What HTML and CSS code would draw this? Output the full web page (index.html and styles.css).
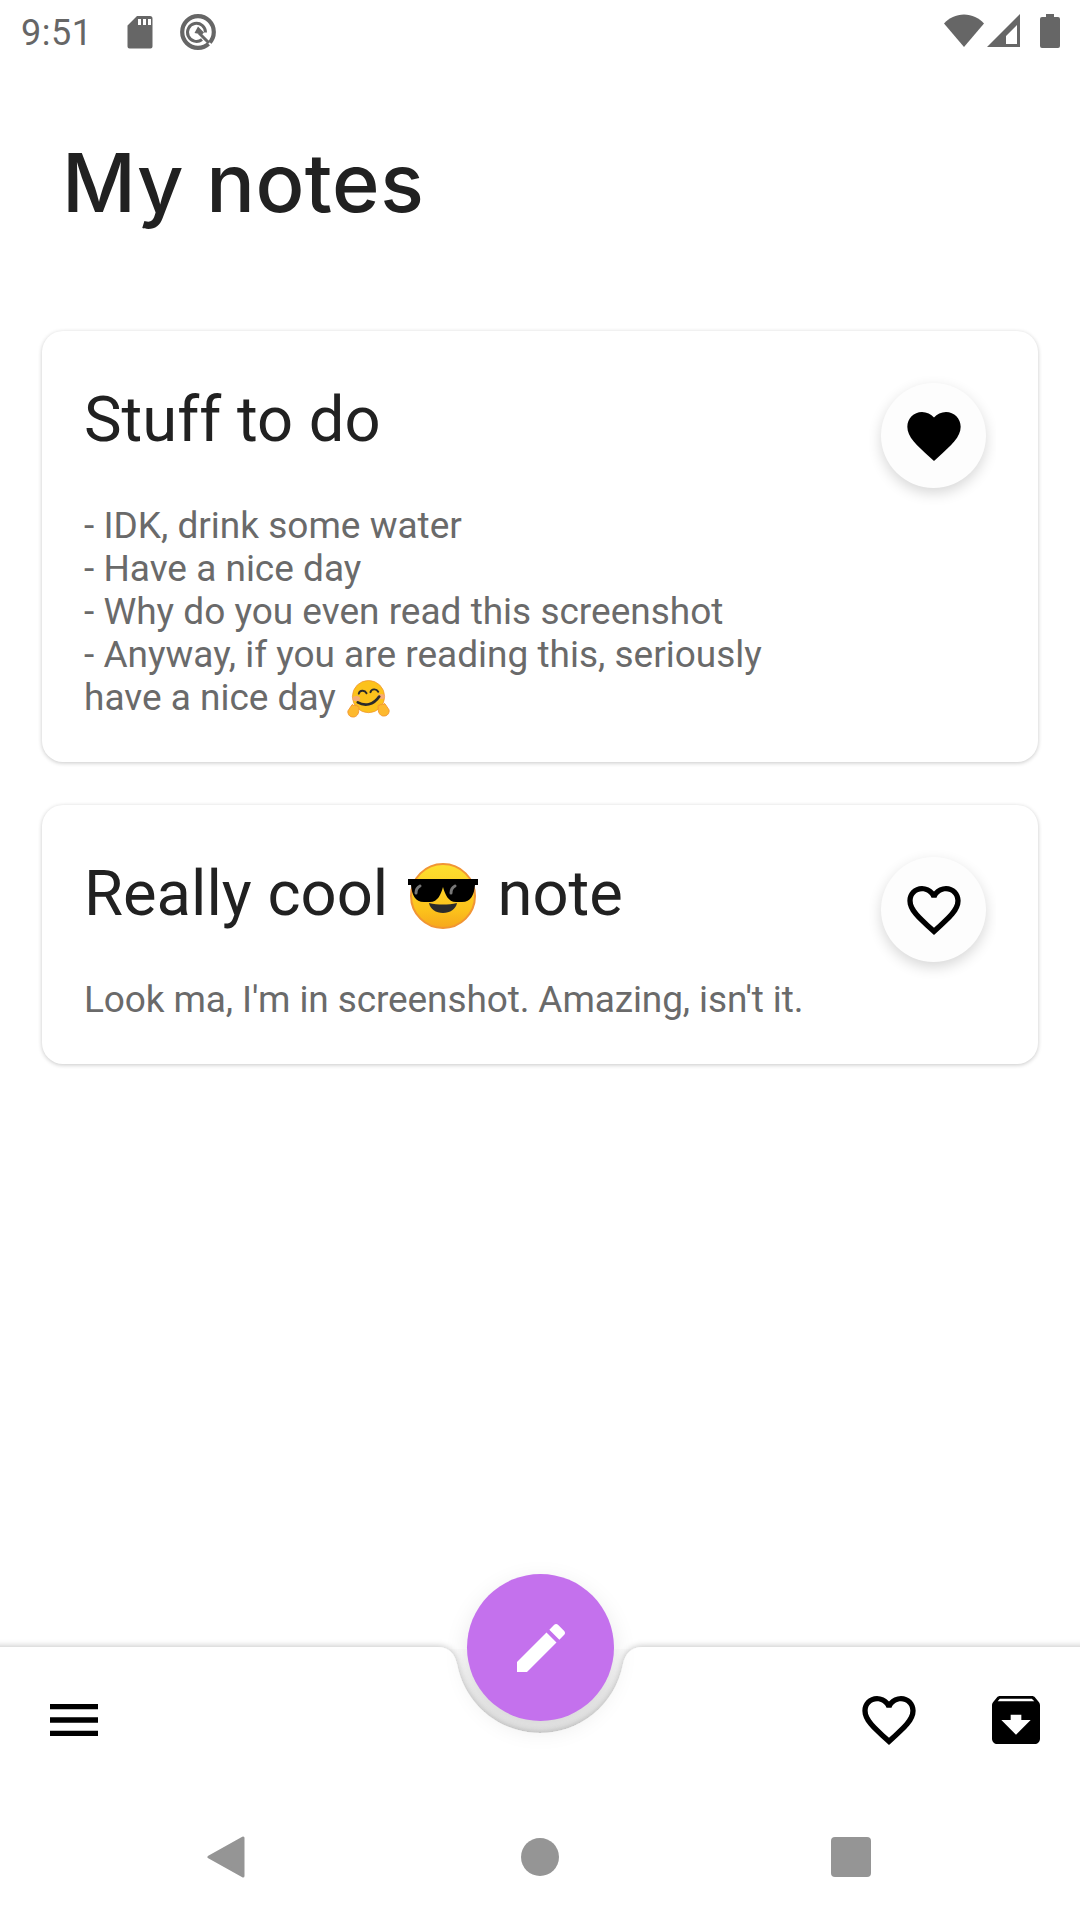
FILE: index.html
```html
<!DOCTYPE html>
<html lang="en">

<head>
    <meta charset="UTF-8">
    <meta name="viewport" content="width=device-width, initial-scale=1.0">
    <title>My notes</title>
    <link rel="stylesheet" href="styles.css">
</head>

<body>
    <div class="page">
        <header class="status-bar">
            <div class="status-left">
                <span class="time">9:51</span>
                <svg class="sd-icon" viewBox="0 0 26 34" width="26" height="34">
                    <path fill="#666" d="M10 1h13a2.500 2.500 0 0 1 2.500 2.500v28a2 2 0 0 1-2 2h-21a2 2 0 0 1-2-2V10.500zM11 4v6h3V4zm5 0v6h3V4zm5 0v6h3V4z" fill-rule="evenodd"/>
                </svg>
                <svg class="q-icon" viewBox="0 0 38 38" width="38" height="38">
                    <circle cx="19" cy="19" r="15.800" fill="none" stroke="#666" stroke-width="4.200"/>
                    <path fill="none" stroke="#666" stroke-width="3" d="M23 26.500a9 9 0 1 1 3.500-7"/>
                    <path fill="#666" d="M19 13.500l6 6-3 3-1.500-1.500-5-1z"/>
                    <path fill="none" stroke="#fff" stroke-width="2" d="M25 25l10 10"/>
                    <path fill="none" stroke="#666" stroke-width="3" d="M20 20l10 10"/>
                </svg>
            </div>
            <div class="status-right">
                <svg viewBox="0 0 40 33" width="40" height="33">
                    <path fill="#666" d="M0 9.500C5 4 12 .5 20 .5s15 3.500 20 9L20 33z"/>
                </svg>
                <svg viewBox="0 0 34 33" width="34" height="33">
                    <path fill="#666" fill-rule="evenodd" d="M33 0v33H0zM30 11l-11 11v8h11z"/>
                </svg>
                <svg class="battery" viewBox="0 0 20 34" width="20" height="34">
                    <path fill="#666" d="M6 0h8v3h4a2 2 0 0 1 2 2v27a2 2 0 0 1-2 2H2a2 2 0 0 1-2-2V5a2 2 0 0 1 2-2h4z"/>
                </svg>
            </div>
        </header>

        <main class="content">
            <h1 class="page-title">My notes</h1>

            <div class="note">
                <div class="note-text">
                    <h2 class="note-title">Stuff to do</h2>
                    <p class="note-body">- IDK, drink some water<br>- Have a nice day<br>- Why do you even read this screenshot<br>- Anyway, if you are reading this, seriously<br>have a nice day
                        <svg class="hug-emoji" viewBox="0 0 44 40" width="43" height="39">
                            <circle cx="22" cy="17" r="16.500" fill="#fcc21b" stroke="#f19534" stroke-width=".8"/>
                            <ellipse cx="9.500" cy="19" rx="3.800" ry="2.600" fill="#f5a58a" opacity=".8"/>
                            <ellipse cx="35" cy="17" rx="3.800" ry="2.600" fill="#f5a58a" opacity=".8"/>
                            <path fill="none" stroke="#2b2b2b" stroke-width="2" stroke-linecap="round" d="M12 14c1-3.500 6-4 8-.5M24 12.500c1-3.500 6-4 8-.5"/>
                            <path fill="none" stroke="#2b2b2b" stroke-width="2.800" stroke-linecap="round" d="M11 23c7 4 16 3 22-6"/>
                            <g fill="#fdb92e" stroke="#f19534" stroke-width=".9" stroke-linejoin="round">
                                <path d="M1 34c-.5-1.500 0-3 1-4l3-4.500c.800-.800 1.700 0 1.300 1 .800-1.500 2.200-1.200 2.200 0 .800-1 2.200-.6 2 .6.800-.4 1.800-.2 1.700.8l-.2 3.600c0 3.500-2.500 6.500-5.500 6.500s-4.900-1.500-5.500-4z"/>
                                <path d="M43 33c.5-1.500 0-3-1-4l-3-4.500c-.8-.8-1.700 0-1.300 1-.8-1.500-2.200-1.200-2.200 0-.8-1-2.200-.6-2 .6-.8-.4-1.800-.2-1.700.8l.2 3.600c0 3.500 2.500 6.500 5.500 6.500s4.900-1.500 5.500-4z"/>
                            </g>
                        </svg>
                    </p>
                </div>
                <div class="fav-clip">
                    <div class="fav-btn">
                        <svg viewBox="0 0 24 24" width="64" height="64">
                            <path d="M12 21.350l-1.450-1.320C5.400 15.360 2 12.280 2 8.500 2 5.420 4.420 3 7.500 3c1.740 0 3.410.810 4.500 2.090C13.090 3.810 14.760 3 16.500 3 19.580 3 22 5.420 22 8.500c0 3.780-3.400 6.860-8.550 11.540L12 21.350z"/>
                        </svg>
                    </div>
                </div>
            </div>

            <div class="note">
                <div class="note-text">
                    <h2 class="note-title">Really cool
                        <svg class="cool-emoji" viewBox="0 0 70 66" width="70" height="66">
                            <defs>
                                <linearGradient id="cool-face" x1="0" y1="0" x2="0" y2="1">
                                    <stop offset="0" stop-color="#fde030"/>
                                    <stop offset=".72" stop-color="#fcc21b"/>
                                    <stop offset="1" stop-color="#f6a71c"/>
                                </linearGradient>
                            </defs>
                            <circle cx="35" cy="33" r="32" fill="url(#cool-face)" stroke="#f19534" stroke-width="2"/>
                            <path d="M0 16h70v6h-3c-1 10-4 17-13 17h-6c-8 0-11-8-13-15-2 7-5 15-13 15h-6C7 39 4 32 3 22H0z" fill="#000"/>
                            <path d="M8 30c0-4 2-6 4-7" fill="none" stroke="#777" stroke-width="3" stroke-linecap="round"/>
                            <path d="M43 30c0-4 2-6 4-7" fill="none" stroke="#777" stroke-width="3" stroke-linecap="round"/>
                            <path d="M21 40c9 2 19 2 28 0-1 6-7 10-14 10s-13-4-14-10z" fill="#2b2b2b"/>
                        </svg>
                        note</h2>
                    <p class="note-body note-body-tight">Look ma, I'm in screenshot. Amazing, isn't it.</p>
                </div>
                <div class="fav-clip">
                    <div class="fav-btn">
                        <svg viewBox="0 0 24 24" width="64" height="64">
                            <path d="M16.500 3c-1.740 0-3.410.810-4.500 2.090C10.910 3.810 9.240 3 7.500 3 4.420 3 2 5.420 2 8.500c0 3.780 3.400 6.860 8.550 11.540L12 21.350l1.450-1.320C18.600 15.360 22 12.280 22 8.500 22 5.420 19.580 3 16.500 3zm-4.400 15.550l-.1.100-.1-.100C7.140 14.240 4 11.390 4 8.500 4 6.500 5.500 5 7.500 5c1.540 0 3.040.990 3.570 2.360h1.870C13.460 5.990 14.960 5 16.500 5c2 0 3.500 1.500 3.500 3.500 0 2.890-3.140 5.740-7.900 10.050z"/>
                        </svg>
                    </div>
                </div>
            </div>
        </main>

        <div class="bottom-bar">
            <svg class="bar-shape" viewBox="0 0 1080 153" width="1080" height="153">
                <defs>
                    <filter id="bar-shadow" x="-5%" y="-20%" width="110%" height="140%">
                        <feDropShadow dx="0" dy="-1" stdDeviation="3" flood-color="#000" flood-opacity=".22"/>
                    </filter>
                    <linearGradient id="notch-shade" x1="0" y1="0" x2="0" y2="1">
                        <stop offset="0" stop-color="#fbfbfb"/>
                        <stop offset=".5" stop-color="#f0f0f0"/>
                        <stop offset="1" stop-color="#ececec"/>
                    </linearGradient>
                </defs>
                <path fill="url(#notch-shade)" d="M445 22H635L623 37c-8 42-44 69-83 69s-75-27-83-69z"/>
                <path fill="#fff" filter="url(#bar-shadow)" d="M-20 20H437c12 0 18 7 20 17 8 42 44 69 83 69s75-27 83-69c2-10 8-17 20-17H1100V180H-20z"/>
            </svg>
            <button class="fab">
                <svg viewBox="0 0 24 24" width="64" height="64">
                    <path fill="#fff" d="M3 17.250V21h3.750L17.810 9.940l-3.750-3.750L3 17.250zM20.710 7.040c.390-.390.390-1.020 0-1.410l-2.340-2.340c-.390-.390-1.020-.390-1.410 0l-1.830 1.830 3.750 3.750 1.830-1.830z"/>
                </svg>
            </button>
            <div class="bar-icons">
                <svg viewBox="0 0 24 24" width="64" height="64">
                    <path d="M3 18h18v-2H3v2zm0-5h18v-2H3v2zm0-5h18V6H3v2z"/>
                </svg>
                <div class="bar-right">
                    <svg viewBox="0 0 24 24" width="64" height="64">
                        <path d="M16.500 3c-1.740 0-3.410.810-4.500 2.090C10.910 3.810 9.240 3 7.500 3 4.420 3 2 5.420 2 8.500c0 3.780 3.400 6.860 8.550 11.540L12 21.350l1.450-1.320C18.600 15.360 22 12.280 22 8.500 22 5.420 19.580 3 16.500 3zm-4.400 15.550l-.1.100-.1-.100C7.140 14.240 4 11.390 4 8.500 4 6.500 5.500 5 7.500 5c1.540 0 3.040.990 3.570 2.360h1.870C13.460 5.990 14.960 5 16.500 5c2 0 3.500 1.500 3.500 3.500 0 2.890-3.140 5.740-7.900 10.050z"/>
                    </svg>
                    <svg viewBox="0 0 24 24" width="64" height="64">
                        <path d="M20.540 5.230l-1.390-1.680C18.880 3.210 18.470 3 18 3H6c-.470 0-.880.210-1.160.550L3.460 5.230C3.170 5.570 3 6.020 3 6.500V19c0 1.100.900 2 2 2h14c1.100 0 2-.900 2-2V6.500c0-.480-.170-.930-.460-1.270zM12 17.500L6.500 12H10v-2h4v2h3.500L12 17.500zM5.120 5l.810-1h12l.940 1H5.120z"/>
                    </svg>
                </div>
            </div>
            <nav class="nav-bar">
                <svg viewBox="0 0 38 42" width="38" height="42">
                    <path fill="#959595" stroke="#959595" stroke-width="3" stroke-linejoin="round" d="M36 2v38L2 21z"/>
                </svg>
                <span class="nav-home"></span>
                <span class="nav-square"></span>
            </nav>
        </div>
    </div>
</body>
</html>
```

FILE: styles.css
```css
* {
    box-sizing: border-box;
}

body {
    margin: 0;
    background-color: #fff;
    font-family: Roboto, sans-serif;
}

.page {
    width: 1080px;
    height: 1920px;
    display: flex;
    flex-direction: column;
    overflow: hidden;
}

.status-bar {
    height: 63px;
    flex-shrink: 0;
    padding: 13px 20px 0 21px;
    display: flex;
    justify-content: space-between;
    align-items: flex-start;
}

.status-left {
    display: flex;
    align-items: flex-start;
}

.time {
    font-size: 36px;
    line-height: 40px;
    letter-spacing: 0.5px;
    color: #666;
    width: 106px;
}

.sd-icon {
    margin-top: 2px;
}

.q-icon {
    margin-left: 26px;
}

.status-right {
    display: flex;
    gap: 3px;
    padding-top: 1px;
}

.battery {
    margin-left: 16px;
}

.content {
    flex: 1;
    padding: 0 42px;
}

.page-title {
    margin: 74px 0 102px 20px;
    font-family: Inter, sans-serif;
    font-size: 81px;
    line-height: 92px;
    letter-spacing: 0.5px;
    font-weight: 500;
    color: #212121;
}

.note {
    width: 996px;
    margin-bottom: 43px;
    padding: 0 42px 43px 42px;
    background-color: #fff;
    border-radius: 21px;
    box-shadow: 0 1px 4px rgba(0, 0, 0, 0.22);
    display: flex;
    justify-content: space-between;
    align-items: flex-start;
}

.note-text {
    width: 770px;
}

.note-title {
    margin: 51px 0 48px 0;
    font-size: 63.3px;
    line-height: 74px;
    font-weight: 400;
    color: #212121;
    white-space: nowrap;
}

.note-body {
    margin: 0;
    font-size: 37px;
    line-height: 43px;
    color: #6a6a6a;
}

.note-body-tight {
    letter-spacing: -0.11px;
}

.hug-emoji {
    vertical-align: -9px;
    margin-left: 2px;
}

.cool-emoji {
    vertical-align: -14px;
    margin: 0 4px 0 4px;
}

/* shadow is cut at the right like on the device */
.fav-clip {
    margin: 42px 0 0 0;
    padding: 10px 10px 20px 20px;
    overflow: hidden;
    flex-shrink: 0;
}

.fav-btn {
    width: 105px;
    height: 105px;
    border-radius: 50%;
    background-color: #fdfdfd;
    box-shadow: 0 5px 14px rgba(0, 0, 0, 0.16);
    display: flex;
    align-items: center;
    justify-content: center;
}

.bottom-bar {
    position: relative;
    height: 293px;
    flex-shrink: 0;
    display: flex;
    flex-direction: column;
    justify-content: flex-end;
}

.bar-shape {
    position: absolute;
    left: 0;
    top: 0;
    display: block;
}

.fab {
    position: absolute;
    left: 467px;
    top: -53px;
    width: 147px;
    height: 147px;
    padding: 0;
    border: none;
    border-radius: 50%;
    background-color: #c471ed;
    box-shadow: 0 8px 24px rgba(0, 0, 0, 0.1);
    display: flex;
    align-items: center;
    justify-content: center;
}

.bar-icons {
    position: relative;
    height: 64px;
    margin: 0 32px 84px 42px;
    display: flex;
    justify-content: space-between;
}

.bar-right {
    display: flex;
    gap: 63px;
}

.nav-bar {
    position: relative;
    height: 42px;
    margin-bottom: 42px;
    display: flex;
    align-items: center;
}

.nav-bar svg {
    margin-left: 207px;
}

.nav-home {
    width: 38px;
    height: 38px;
    margin-left: 276px;
    border-radius: 50%;
    background-color: #959595;
}

.nav-square {
    width: 40px;
    height: 40px;
    margin-left: 272px;
    border-radius: 4px;
    background-color: #959595;
}
```
